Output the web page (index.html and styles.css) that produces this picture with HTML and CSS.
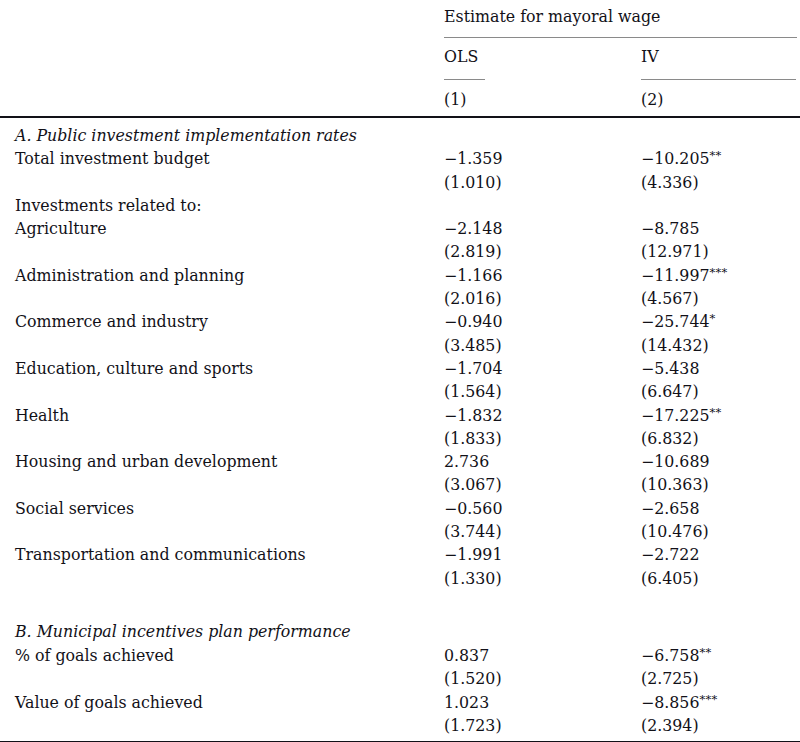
FILE: index.html
```html
<!DOCTYPE html>
<html lang="en">
<head>
<meta charset="utf-8">
<title>Estimate for mayoral wage</title>
<link rel="stylesheet" href="styles.css">
</head>
<body>
<div class="table">
  <div class="head head-1">
    <div class="label"></div>
    <div class="span-2"><div class="estimate">Estimate for mayoral wage</div></div>
  </div>
  <div class="head head-2">
    <div class="label"></div>
    <div class="c1"><div class="rule-short">OLS</div></div>
    <div class="c2"><div class="rule-long">IV</div></div>
  </div>
  <div class="head head-3">
    <div class="label"></div>
    <div class="c1">(1)</div>
    <div class="c2">(2)</div>
  </div>

  <div class="body">
    <div class="row"><div class="label italic">A. Public investment implementation rates</div><div class="c1"></div><div class="c2"></div></div>
    <div class="row"><div class="label">Total investment budget</div><div class="c1">−1.359</div><div class="c2">−10.205<sup class="star">**</sup></div></div>
    <div class="row"><div class="label"></div><div class="c1">(1.010)</div><div class="c2">(4.336)</div></div>
    <div class="row"><div class="label">Investments related to:</div><div class="c1"></div><div class="c2"></div></div>
    <div class="row"><div class="label">Agriculture</div><div class="c1">−2.148</div><div class="c2">−8.785</div></div>
    <div class="row"><div class="label"></div><div class="c1">(2.819)</div><div class="c2">(12.971)</div></div>
    <div class="row"><div class="label">Administration and planning</div><div class="c1">−1.166</div><div class="c2">−11.997<sup class="star">***</sup></div></div>
    <div class="row"><div class="label"></div><div class="c1">(2.016)</div><div class="c2">(4.567)</div></div>
    <div class="row"><div class="label">Commerce and industry</div><div class="c1">−0.940</div><div class="c2">−25.744<sup class="star">*</sup></div></div>
    <div class="row"><div class="label"></div><div class="c1">(3.485)</div><div class="c2">(14.432)</div></div>
    <div class="row"><div class="label">Education, culture and sports</div><div class="c1">−1.704</div><div class="c2">−5.438</div></div>
    <div class="row"><div class="label"></div><div class="c1">(1.564)</div><div class="c2">(6.647)</div></div>
    <div class="row"><div class="label">Health</div><div class="c1">−1.832</div><div class="c2">−17.225<sup class="star">**</sup></div></div>
    <div class="row"><div class="label"></div><div class="c1">(1.833)</div><div class="c2">(6.832)</div></div>
    <div class="row"><div class="label">Housing and urban development</div><div class="c1">2.736</div><div class="c2">−10.689</div></div>
    <div class="row"><div class="label"></div><div class="c1">(3.067)</div><div class="c2">(10.363)</div></div>
    <div class="row"><div class="label">Social services</div><div class="c1">−0.560</div><div class="c2">−2.658</div></div>
    <div class="row"><div class="label"></div><div class="c1">(3.744)</div><div class="c2">(10.476)</div></div>
    <div class="row"><div class="label">Transportation and communications</div><div class="c1">−1.991</div><div class="c2">−2.722</div></div>
    <div class="row"><div class="label"></div><div class="c1">(1.330)</div><div class="c2">(6.405)</div></div>

    <div class="spacer"></div>

    <div class="row b"><div class="label italic">B. Municipal incentives plan performance</div><div class="c1"></div><div class="c2"></div></div>
    <div class="row b"><div class="label">% of goals achieved</div><div class="c1">0.837</div><div class="c2">−6.758<sup class="star">**</sup></div></div>
    <div class="row b"><div class="label"></div><div class="c1">(1.520)</div><div class="c2">(2.725)</div></div>
    <div class="row b"><div class="label">Value of goals achieved</div><div class="c1">1.023</div><div class="c2">−8.856<sup class="star">***</sup></div></div>
    <div class="row b"><div class="label"></div><div class="c1">(1.723)</div><div class="c2">(2.394)</div></div>
  </div>
</div>
</body>
</html>
```

FILE: styles.css
```css
html, body {
  margin: 0;
  padding: 0;
  background: #ffffff;
}

body {
  font-family: "DejaVu Serif", "Liberation Serif", serif;
  font-size: 15.8px;
  color: #121118;
  width: 800px;
}

.table {
  width: 800px;
}

.head,
.row {
  display: grid;
  grid-template-columns: 444px 197px 159px;
  line-height: 23px;
  white-space: nowrap;
}

.head-1 {
  padding-top: 4.5px;
}

.span-2 {
  grid-column: 2 / 4;
  padding-right: 3px;
}

.estimate {
  padding-bottom: 9.5px;
  border-bottom: 1px solid #8a8a8a;
}

.head-2 {
  padding-top: 6.5px;
}

.rule-short {
  width: 41px;
  padding-bottom: 11.5px;
  border-bottom: 1px solid #8a8a8a;
}

.rule-long {
  width: 155px;
  padding-bottom: 11.5px;
  border-bottom: 1px solid #8a8a8a;
}

.head-3 {
  padding-top: 7.5px;
  padding-bottom: 5.5px;
  border-bottom: 2px solid #121118;
}

.body {
  padding-top: 6px;
  padding-bottom: 3px;
  border-bottom: 2px solid #121118;
}

.row {
  line-height: 23.3px;
}

.row.b {
  line-height: 23.5px;
}

.label {
  padding-left: 15px;
}

.italic {
  font-style: italic;
}

.spacer {
  height: 30.5px;
}

.star {
  font-size: 11.5px;
  line-height: 0;
  vertical-align: 0.45em;
  letter-spacing: 0.3px;
}
```
